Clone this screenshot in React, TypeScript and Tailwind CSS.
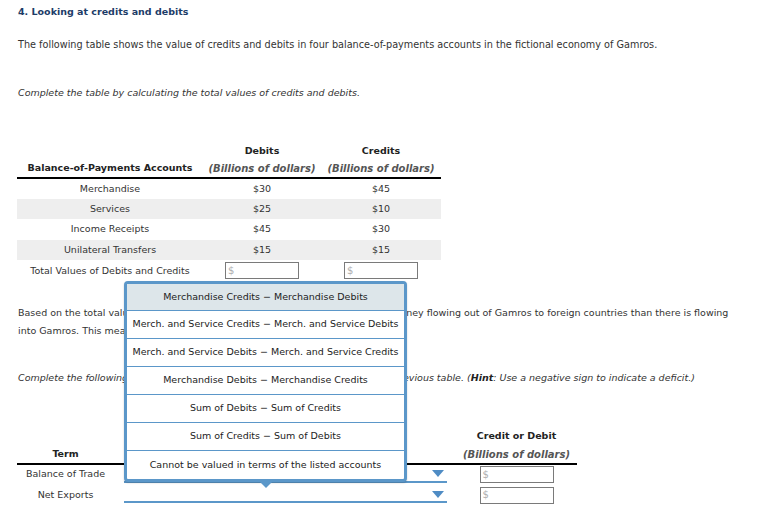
import React from 'react';

const rows = [
  { name: 'Merchandise', debit: '$30', credit: '$45' },
  { name: 'Services', debit: '$25', credit: '$10' },
  { name: 'Income Receipts', debit: '$45', credit: '$30' },
  { name: 'Unilateral Transfers', debit: '$15', credit: '$15' },
];

const options = [
  'Merchandise Credits − Merchandise Debits',
  'Merch. and Service Credits − Merch. and Service Debits',
  'Merch. and Service Debits − Merch. and Service Credits',
  'Merchandise Debits − Merchandise Credits',
  'Sum of Debits − Sum of Credits',
  'Sum of Credits − Sum of Debits',
  'Cannot be valued in terms of the listed accounts',
];

// little money input with the grey $ sign
const MoneyBox = () => (
  <div className="w-[74px] h-[17px] border border-[#7a7a7a] bg-white flex items-center pl-[2px] text-[10px] text-[#b0b0b0] leading-none">
    $
  </div>
);

const SelectLine = () => (
  <div className="h-[16px] border-b-2 border-[#5b97c9] flex items-center justify-end pr-[3px]">
    <svg width="12" height="7" viewBox="0 0 12 7">
      <polygon points="0,0 12,0 6,7" fill="#4f8cc4" />
    </svg>
  </div>
);

export default function App() {
  return (
    <div
      className="relative w-[768px] h-[527px] bg-white text-[#333] text-[9.5px] overflow-hidden"
      style={{ fontFamily: '"DejaVu Sans", Verdana, sans-serif' }}
    >
      <div className="pl-[18px] pr-[14px]">
        <h2 className="mt-[4px] h-[16px] leading-[16px] font-bold text-[#1d3c68]">
          4. Looking at credits and debits
        </h2>
        <p className="mt-[17px] leading-[16px] text-[9.7px]">
          The following table shows the value of credits and debits in four balance-of-payments accounts in the fictional economy of Gamros.
        </p>
        <p className="mt-[32px] leading-[16px] italic">
          Complete the table by calculating the total values of credits and debits.
        </p>
      </div>

      {/* first table */}
      <table className="ml-[17px] mt-[41px] border-collapse w-[424px] table-fixed">
        <thead>
          <tr className="h-[18px]">
            <th className="w-[186px]"></th>
            <th className="w-[118px] font-bold text-[#222]">Debits</th>
            <th className="w-[120px] font-bold text-[#222]">Credits</th>
          </tr>
          <tr className="h-[18px] border-b-2 border-black">
            <th className="font-bold text-[#222] align-middle">Balance-of-Payments Accounts</th>
            <th className="font-bold italic text-[#555] align-middle text-[10px]">(Billions of dollars)</th>
            <th className="font-bold italic text-[#555] align-middle text-[10px]">(Billions of dollars)</th>
          </tr>
        </thead>
        <tbody>
          {rows.map((r, i) => (
            <tr key={r.name} className={`h-[20.5px] text-center ${i % 2 === 1 ? 'bg-[#eeeeee]' : ''}`}>
              <td>{r.name}</td>
              <td>{r.debit}</td>
              <td>{r.credit}</td>
            </tr>
          ))}
          <tr className="h-[21.5px] text-center">
            <td>Total Values of Debits and Credits</td>
            <td>
              <div className="flex justify-center"><MoneyBox /></div>
            </td>
            <td>
              <div className="flex justify-center"><MoneyBox /></div>
            </td>
          </tr>
        </tbody>
      </table>

      <div className="pl-[18px] pr-[14px]">
        <p className="mt-[22px] leading-[18px] pr-[14px]">
          Based on the total values of debits and credits in the first table, there is more money flowing out of Gamros to foreign countries than there is flowing into Gamros. This means a deficit.
        </p>
        <p className="mt-[29px] leading-[18px] italic">
          Complete the following table by calculating all the values from the data in the previous table. (<b className="text-[#222]">Hint</b>: Use a negative sign to indicate a deficit.)
        </p>
      </div>

      {/* second table */}
      <table className="ml-[17px] mt-[41px] border-collapse w-[560px] table-fixed">
        <thead>
          <tr className="h-[18px]">
            <th className="w-[97px]"></th>
            <th className="w-[342px]"></th>
            <th className="w-[121px] font-bold text-[#222]">Credit or Debit</th>
          </tr>
          <tr className="h-[18px] border-b-2 border-black">
            <th className="font-bold text-[#222] align-middle">Term</th>
            <th className="font-bold text-[#222] align-middle">Formula</th>
            <th className="font-bold italic text-[#555] align-middle text-[10px]">(Billions of dollars)</th>
          </tr>
        </thead>
        <tbody>
          {['Balance of Trade', 'Net Exports'].map((t) => (
            <tr key={t} className="h-[21px]">
              <td className="text-center">{t}</td>
              <td className="pl-[10px] pr-[9px]"><SelectLine /></td>
              <td>
                <div className="flex justify-center"><MoneyBox /></div>
              </td>
            </tr>
          ))}
        </tbody>
      </table>

      {/* open dropdown list */}
      <div className="absolute left-[124px] top-[281px] w-[283px]">
        <div className="border-[3px] border-[#5b97c9] rounded-[4px] bg-white shadow-[0_1px_2px_rgba(0,0,0,0.2)] text-[#222]">
          {options.map((o, i) => (
            <div
              key={o}
              className={`flex items-center justify-center text-center whitespace-nowrap ${i === 0 ? 'bg-[#dde6ea] h-[27px]' : 'h-[28px]'} ${i < options.length - 1 ? 'border-b border-[#5b97c9]' : ''}`}
            >
              {o}
            </div>
          ))}
        </div>
        <div className="flex justify-center -mt-[1px]">
          <svg width="14" height="7" viewBox="0 0 14 7">
            <polygon points="0,0 14,0 7,7" fill="#5b97c9" />
          </svg>
        </div>
      </div>
    </div>
  );
}
